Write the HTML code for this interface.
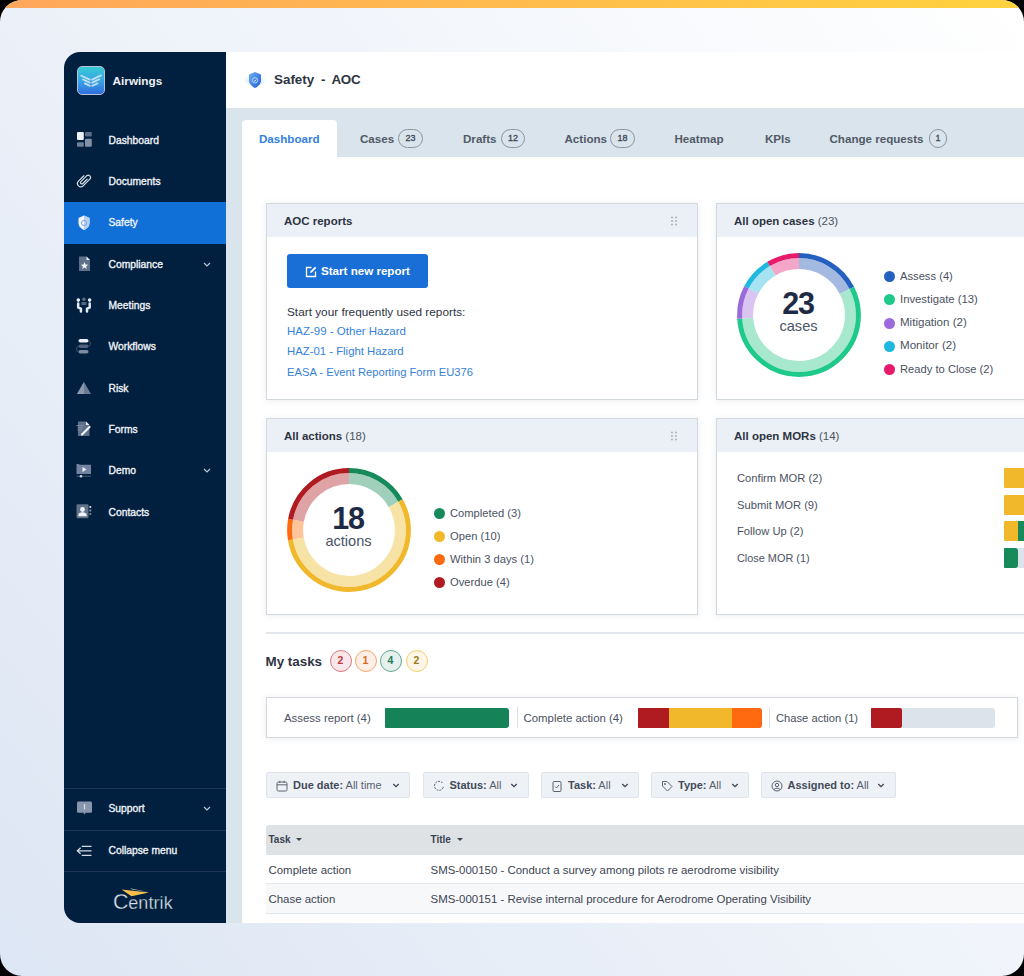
<!DOCTYPE html>
<html><head><meta charset="utf-8">
<style>
*{box-sizing:border-box;margin:0;padding:0}
html,body{width:1024px;height:976px;overflow:hidden;background:#000;font-family:"Liberation Sans",sans-serif}
.frame{position:absolute;left:0;top:0;width:1024px;height:976px;border-radius:22px;overflow:hidden;
 background:linear-gradient(52deg,#dde6f4 0%,#ffffff 100%)}
.band{position:absolute;left:0;top:0;width:1024px;height:8px;background:linear-gradient(90deg,#ffa65c,#ffd23e)}
.abs{position:absolute}
.t{position:absolute;white-space:nowrap;line-height:20px;height:20px}
.sb{position:absolute;left:64px;top:52px;width:162px;height:871px;background:#011f3e;border-radius:16px 0 0 16px;overflow:hidden}
.sbi{position:absolute;left:0;width:162px;height:41.33px}
.sbi .t{left:44.5px;top:11.4px;color:#eef1f6;font-weight:normal;font-size:10.3px;letter-spacing:0px;-webkit-text-stroke:0.35px #eef1f6}
.sbi svg{position:absolute;left:13px;top:13.7px}
.sbi.act{background:#1170d8;height:41.8px}
.sbsep{position:absolute;left:0;width:162px;height:1px;background:#1f3756}
.main{position:absolute;left:226px;top:52px;width:798px;height:871px;background:#d9e4ec}
.hdr{position:absolute;left:226px;top:52px;width:798px;height:56px;background:#fff}
.tab{position:absolute}
.tabt{font-size:11.6px;font-weight:bold;color:#525a67}
.badge{position:absolute;height:18.5px;border:1px solid #8d95a1;border-radius:9.5px;font-size:9px;line-height:17.3px;text-align:center;color:#3d4554;font-weight:normal;-webkit-text-stroke:0.3px #3d4554}
.card{position:absolute;background:#fff;border:1px solid #d3d8df;box-shadow:0 1px 7px rgba(30,50,90,0.09)}
.card .ch{position:absolute;left:0;top:0;right:0;height:33px;background:#ebf0f7}
.card .ct{position:absolute;left:17px;top:7px;white-space:nowrap;line-height:20px;font-size:11.5px;font-weight:bold;color:#2e3442}
.card .ct span{font-weight:normal;color:#4b5361}
.lg{position:absolute;white-space:nowrap;line-height:20px;font-size:11.2px;color:#4a5262}
.dot{position:absolute;width:11px;height:11px;border-radius:50%;margin:-0.5px 0 0 -0.5px}
.lnk{position:absolute;white-space:nowrap;line-height:20px;font-size:11.2px;color:#3582da}
.mb{position:absolute;width:22px;height:22px;border-radius:50%;border:1.7px solid;font-size:10.5px;line-height:18.6px;text-align:center;font-weight:bold}
.flt{position:absolute;top:772px;height:26px;background:#eef1f6;border:1px solid #dfe3ea;border-radius:2px}
.flt .t{top:2px;font-size:11px;color:#5a6270}
.flt .t b{color:#434b59}
.tr{position:absolute;left:266px;width:758px;height:29.5px}
.tr .t{top:5.3px;font-size:11.45px;color:#3d4554}
.content{position:absolute;left:242px;top:157px;width:782px;height:766px;background:#fff}
</style></head><body>
<div class="frame">
<div class="band"></div>

<!-- SIDEBAR -->
<div class="sb">
<div class="abs" style="left:13px;top:14px;width:28px;height:29px;border-radius:5px;background:linear-gradient(180deg,#35cbd6 0%,#3aa6e4 50%,#2f6ddf 100%);border:1px solid #b7c3d3">
<svg width="26" height="27" viewBox="0 0 26 27" style="position:absolute;left:0;top:0"><g fill="none" stroke="#dff0fa" stroke-width="1.75" stroke-linecap="round" opacity="0.8"><path d="M3.2 8.7 L11.8 12.6"/><path d="M23 8.4 L14.2 12.6"/><path d="M5.1 12.5 L11.8 15.6"/><path d="M21.3 12.3 L14.2 15.6"/><path d="M6.9 16.4 L11.8 18.9"/><path d="M19.5 16.4 L14.2 18.9"/></g></svg></div>
<div class="t" style="left:48.5px;top:19px;color:#eef1f6;font-weight:bold;font-size:11.8px;letter-spacing:0px">Airwings</div>
<div class="sbi" style="top:67.33px"><svg width="16" height="16" viewBox="0 0 16 16" style="left:11.6px;top:12.37px"><rect x="1" y="0" width="6.8" height="8" rx="1" fill="#eef1f6"/><rect x="9" y="0" width="6.8" height="4.4" rx="1" fill="#5d6e88"/><rect x="1" y="10.2" width="6.8" height="4.5" rx="1" fill="#6f7f97"/><rect x="9" y="6.7" width="6.8" height="8" rx="1" fill="#8391a8"/></svg><div class="t">Dashboard</div></div>
<div class="sbi" style="top:108.66px"><svg width="16" height="16" viewBox="0 0 16 16" style="left:11.6px;top:12.34px"><g transform="rotate(45 8 8)"><path d="M8.9 4.6 V10.6 A1.35 1.35 0 0 1 6.2 10.6 V2.6 A2.3 2.3 0 0 1 10.8 2.6 V12 A3.3 3.3 0 0 1 4.2 12 V4.4" fill="none" stroke="#d9dfe8" stroke-width="1.2" stroke-linecap="round"/></g></svg><div class="t">Documents</div></div>
<div class="sbi act" style="top:149.99px"><svg width="16" height="16" viewBox="0 0 16 16" style="left:11.6px;top:12.71px"><path d="M8 0.5 L13.5 3 L13.5 8 C13.5 11.5 11 13.6 8 15 C5 13.6 2.5 11.5 2.5 8 L2.5 3 Z" fill="#f2f5fa"/><path d="M8 0.5 L13.5 3 L13.5 8 C13.5 11.5 11 13.6 8 15 Z" fill="#b8cff0"/><circle cx="8" cy="8" r="2.6" fill="none" stroke="#7fa6e6" stroke-width="1"/></svg><div class="t">Safety</div></div>
<div class="sbi" style="top:191.32px"><svg width="16" height="16" viewBox="0 0 16 16" style="left:11.6px;top:12.68px"><path d="M3 0.5 L10.5 0.5 L14 4 L14 15 L3 15 Z" fill="#5f7089"/><path d="M10.5 0.5 L14 4 L10.5 4 Z" fill="#e8ecf3"/><path d="M8.5 6 L9.5 8.6 L12.2 8.7 L10.1 10.4 L10.8 13 L8.5 11.5 L6.2 13 L6.9 10.4 L4.8 8.7 L7.5 8.6 Z" fill="#f2f4f8"/></svg><div class="t">Compliance</div><svg class="chev" width="8" height="5" viewBox="0 0 8 5" style="position:absolute;left:139px;top:18.5px"><path d="M1 1 L4 4 L7 1" fill="none" stroke="#c4ccd8" stroke-width="1.1"/></svg></div>
<div class="sbi" style="top:232.65px"><svg width="16" height="16" viewBox="0 0 16 16" style="left:11.6px;top:12.35px"><circle cx="2.3" cy="3.1" r="1.8" fill="#e9edf4"/><circle cx="13.6" cy="3.1" r="1.8" fill="#e9edf4"/><circle cx="7.9" cy="2.2" r="1.7" fill="#5d6e88"/><rect x="5.4" y="5" width="5" height="3" rx="0.6" fill="#536581"/><path d="M2.2 6.6 L2.2 10.6 L4.9 11.6 L4.9 14.4" fill="none" stroke="#e4e9f2" stroke-width="2.5" stroke-linecap="round" stroke-linejoin="round"/><path d="M13.7 6.6 L13.7 10.6 L11 11.6 L11 14.4" fill="none" stroke="#e4e9f2" stroke-width="2.5" stroke-linecap="round" stroke-linejoin="round"/></svg><div class="t">Meetings</div></div>
<div class="sbi" style="top:273.98px"><svg width="16" height="16" viewBox="0 0 16 16" style="left:11.6px;top:12.72px"><rect x="2.5" y="0" width="10" height="3.5" rx="1.75" fill="#eef1f6"/><rect x="2.5" y="5.6" width="10" height="3.4" rx="1.7" fill="#4e607b"/><rect x="2.5" y="11" width="10" height="3.6" rx="1.8" fill="#7c8ba2"/><path d="M12.5 1.8 C15 1.8 15 7.3 12.5 7.3 M2.5 7.3 C0 7.3 0 12.8 2.5 12.8" fill="none" stroke="#4e607b" stroke-width="0.9"/></svg><div class="t">Workflows</div></div>
<div class="sbi" style="top:315.31px"><svg width="16" height="16" viewBox="0 0 16 16" style="left:11.6px;top:14.39px"><path d="M8 0 L15 12 L1 12 Z" fill="#6a7a92"/><path d="M8 0 L8 12 L1 12 Z" fill="#8a98ad"/></svg><div class="t">Risk</div></div>
<div class="sbi" style="top:356.64px"><svg width="16" height="16" viewBox="0 0 16 16" style="left:11.6px;top:12.26px"><path d="M2 0.5 L10 0.5 L13.5 4 L13.5 15 L2 15 Z" fill="#5f7089"/><path d="M10 0.5 L13.5 4 L10 4 Z" fill="#e8ecf3"/><path d="M0.5 4.6 L8 4.6 M1.5 6.8 L7 6.8 M1.5 9 L6 9" stroke="#7e8da4" stroke-width="1"/><path d="M13.5 6 L6 13.5" stroke="#f2f4f8" stroke-width="2.2" stroke-linecap="round"/></svg><div class="t">Forms</div></div>
<div class="sbi" style="top:397.97px"><svg width="16" height="16" viewBox="0 0 16 16" style="left:11.6px;top:13.23px"><path d="M0.5 1 L3 1 L3.6 1.8 L15 1.8 L15 11 L0.5 11 Z" fill="#7282a0"/><path d="M6.5 4 L10.5 6.5 L6.5 9 Z" fill="#eef1f6"/><path d="M0.5 13.2 L15 13.2" stroke="#5d6e88" stroke-width="0.8"/><circle cx="5" cy="13.2" r="1.3" fill="#d0d6e0"/></svg><div class="t">Demo</div><svg class="chev" width="8" height="5" viewBox="0 0 8 5" style="position:absolute;left:139px;top:18.5px"><path d="M1 1 L4 4 L7 1" fill="none" stroke="#c4ccd8" stroke-width="1.1"/></svg></div>
<div class="sbi" style="top:439.30px"><svg width="16" height="16" viewBox="0 0 16 16" style="left:11.6px;top:13.00px"><rect x="0.5" y="0.3" width="12" height="14" rx="1" fill="#5f7089"/><circle cx="6.5" cy="5.5" r="2.4" fill="#eef1f6"/><path d="M2.2 12.2 C2.2 9 4 8.2 6.5 8.2 C9 8.2 10.8 9 10.8 12.2 Z" fill="#eef1f6"/><rect x="13.4" y="2" width="1.8" height="2" fill="#c8d0dc"/><rect x="13.4" y="5.5" width="1.8" height="2" fill="#8b98ab"/><rect x="13.4" y="9" width="1.8" height="2" fill="#6f7f97"/></svg><div class="t">Contacts</div></div>
<div class="sbsep" style="top:735.5px"></div>
<div class="sbi" style="top:736px"><svg width="16" height="16" viewBox="0 0 16 16" style="left:12px;top:12.5px"><rect x="1" y="0.5" width="15" height="11.3" rx="1.4" fill="#8796ad"/><path d="M7 11.5 L8.5 13.6 L10 11.5 Z" fill="#8796ad"/><rect x="7.9" y="3" width="1.2" height="5.5" fill="#d5dce6"/></svg><div class="t">Support</div><svg width="8" height="5" viewBox="0 0 8 5" style="position:absolute;left:139px;top:17.5px"><path d="M1 1 L4 4 L7 1" fill="none" stroke="#c4ccd8" stroke-width="1.1"/></svg></div>
<div class="sbsep" style="top:777.5px"></div>
<div class="sbi" style="top:778px"><svg width="16" height="16" viewBox="0 0 16 16" style="left:12px;top:13.5px"><path d="M5.7 2.3 L15.5 2.3 M1.5 6.8 L15.5 6.8 M5.7 11.3 L15.5 11.3" stroke="#d5dbe5" stroke-width="1.3"/><path d="M4.6 3.8 L1.4 6.8 L4.6 9.8" fill="none" stroke="#d5dbe5" stroke-width="1.3"/></svg><div class="t">Collapse menu</div></div>
<div class="sbsep" style="top:819px"></div>
<svg width="70" height="30" viewBox="0 0 70 30" style="position:absolute;left:46px;top:832px">
<path d="M11.6 5.6 L39 8.4 L21.5 12.2 Z" fill="#f5bf4a"/><path d="M20 4.2 L39 8.2 L22 5.6 Z" fill="#b9c1cc"/>
<text x="3" y="24.8" font-family="Liberation Sans" font-size="21.5" fill="#dde2e9" stroke="#011f3e" stroke-width="0.35">C</text>
<text x="18.2" y="24.8" font-family="Liberation Sans" font-size="18" fill="#dde2e9" stroke="#011f3e" stroke-width="0.3" letter-spacing="0.1">entrik</text></svg>
</div>

<div class="main"></div>
<div class="hdr">
<svg width="24" height="20" viewBox="0 0 24 20" style="position:absolute;left:16.7px;top:18.5px"><defs><linearGradient id="hg" x1="0" y1="0" x2="1" y2="1"><stop offset="0" stop-color="#6fb0f5"/><stop offset="1" stop-color="#1f5fd3"/></linearGradient><radialGradient id="hglow"><stop offset="0.3" stop-color="#cfe1fa"/><stop offset="1" stop-color="#dbe8fb" stop-opacity="0"/></radialGradient></defs><rect x="0" y="4" width="24" height="11" fill="url(#hglow)"/><path d="M12 1 L18 3.6 L18 9 C18 13 15.2 15.5 12 17 C8.8 15.5 6 13 6 9 L6 3.6 Z" fill="url(#hg)"/><circle cx="12" cy="9.3" r="2.7" fill="none" stroke="#bcd6f7" stroke-width="0.9"/><path d="M10.9 9.3 L11.8 10.2 L13.3 8.5" fill="none" stroke="#e3eefc" stroke-width="0.9"/></svg>
<div class="t" style="left:48px;top:17.5px;font-size:13.4px;font-weight:bold;color:#2e3442">Safety</div><div class="t" style="left:95px;top:17.5px;font-size:13.4px;font-weight:bold;color:#2e3442">-</div><div class="t" style="left:105.5px;top:17.5px;font-size:13.4px;font-weight:bold;color:#2e3442;letter-spacing:-0.3px">AOC</div>
</div>
<div class="tab" style="left:242px;top:120px;width:94.5px;height:37px;background:#fff;border-radius:4px 4px 0 0"></div>
<div class="t tabt" style="left:259px;top:128.5px;color:#3580dc">Dashboard</div>
<div class="t tabt" style="left:360px;top:128.5px">Cases</div><div class="badge" style="left:398px;top:129.3px;width:25px">23</div>
<div class="t tabt" style="left:463px;top:128.5px">Drafts</div><div class="badge" style="left:501px;top:129.3px;width:24px">12</div>
<div class="t tabt" style="left:564.5px;top:128.5px">Actions</div><div class="badge" style="left:610px;top:129.3px;width:25px">18</div>
<div class="t tabt" style="left:674.5px;top:128.5px">Heatmap</div>
<div class="t tabt" style="left:765px;top:128.5px">KPIs</div>
<div class="t tabt" style="left:829.5px;top:128.5px">Change requests</div><div class="badge" style="left:929px;top:129.3px;width:18px">1</div>

<div class="content"></div>

<!-- card 1 -->
<div class="card" style="left:266px;top:203px;width:432px;height:197px">
 <div class="ch"></div><div class="ct">AOC reports</div>
 <svg width="8" height="10" viewBox="0 0 8 10" style="position:absolute;left:403px;top:12px"><g fill="#a9b1bd"><circle cx="2" cy="1.5" r="1"/><circle cx="6" cy="1.5" r="1"/><circle cx="2" cy="5" r="1"/><circle cx="6" cy="5" r="1"/><circle cx="2" cy="8.5" r="1"/><circle cx="6" cy="8.5" r="1"/></g></svg>
 <div class="abs" style="left:20px;top:50px;width:141px;height:34px;background:#1a6fd6;border-radius:3px"></div>
 <svg width="12" height="12" viewBox="0 0 12 12" style="position:absolute;left:38px;top:62px"><path d="M6.5 1.5 L1.5 1.5 L1.5 10.5 L10.5 10.5 L10.5 5.5" fill="none" stroke="#fff" stroke-width="1.3"/><path d="M5 7 L5.5 5.2 L10 0.8 L11.3 2.1 L6.8 6.5 Z" fill="#fff"/></svg>
 <div class="t" style="left:54px;top:57px;font-size:11.6px;font-weight:bold;color:#fff">Start new report</div>
 <div class="lg" style="left:20px;top:97.5px;color:#2e3442;font-size:11.8px">Start your frequently used reports:</div>
 <div class="lnk" style="left:20px;top:117.3px;font-size:11.5px">HAZ-99 - Other Hazard</div>
 <div class="lnk" style="left:20px;top:137.4px;font-size:11.35px">HAZ-01 - Flight Hazard</div>
 <div class="lnk" style="left:20px;top:157.5px">EASA - Event Reporting Form EU376</div>
</div>

<!-- card 2 -->
<div class="card" style="left:716px;top:203px;width:330px;height:197px">
 <div class="ch"></div><div class="ct">All open cases <span>(23)</span></div>
 <svg width="130" height="130" viewBox="0 0 130 130" style="position:absolute;left:17px;top:46.4px" id="donut1"><circle cx="65" cy="65" r="51.4" fill="none" stroke="#a3b9e0" stroke-width="11" stroke-dasharray="56.166 322.956" stroke-dashoffset="0.000" transform="rotate(-90 65 65)"/><circle cx="65" cy="65" r="51.4" fill="none" stroke="#a8e8cf" stroke-width="11" stroke-dasharray="182.540 322.956" stroke-dashoffset="-56.166" transform="rotate(-90 65 65)"/><circle cx="65" cy="65" r="51.4" fill="none" stroke="#d9c5f0" stroke-width="11" stroke-dasharray="28.083 322.956" stroke-dashoffset="-238.706" transform="rotate(-90 65 65)"/><circle cx="65" cy="65" r="51.4" fill="none" stroke="#a6e3f2" stroke-width="11" stroke-dasharray="28.083 322.956" stroke-dashoffset="-266.790" transform="rotate(-90 65 65)"/><circle cx="65" cy="65" r="51.4" fill="none" stroke="#f4a6c8" stroke-width="11" stroke-dasharray="28.083 322.956" stroke-dashoffset="-294.873" transform="rotate(-90 65 65)"/><circle cx="65" cy="65" r="59.4" fill="none" stroke="#2360c0" stroke-width="5" stroke-dasharray="64.908 373.221" stroke-dashoffset="0.000" transform="rotate(-90 65 65)"/><circle cx="65" cy="65" r="59.4" fill="none" stroke="#1ec98a" stroke-width="5" stroke-dasharray="210.951 373.221" stroke-dashoffset="-64.908" transform="rotate(-90 65 65)"/><circle cx="65" cy="65" r="59.4" fill="none" stroke="#9b6bdb" stroke-width="5" stroke-dasharray="32.454 373.221" stroke-dashoffset="-275.859" transform="rotate(-90 65 65)"/><circle cx="65" cy="65" r="59.4" fill="none" stroke="#1fb8de" stroke-width="5" stroke-dasharray="32.454 373.221" stroke-dashoffset="-308.313" transform="rotate(-90 65 65)"/><circle cx="65" cy="65" r="59.4" fill="none" stroke="#e6196a" stroke-width="5" stroke-dasharray="32.454 373.221" stroke-dashoffset="-340.767" transform="rotate(-90 65 65)"/></svg>
 <div class="t" style="left:46px;top:83.5px;width:70px;text-align:center;font-size:30.5px;line-height:30px;height:30px;font-weight:bold;color:#1f2a44;letter-spacing:-1.2px">23</div>
 <div class="t" style="left:46.5px;top:112px;width:70px;text-align:center;font-size:14.6px;color:#4a5466">cases</div>
 <div class="dot" style="left:167px;top:67.5px;background:#2360c0"></div><div class="lg" style="left:183px;top:62px">Assess (4)</div>
 <div class="dot" style="left:167px;top:90.5px;background:#1ec98a"></div><div class="lg" style="left:183px;top:85px;font-size:11.3px">Investigate (13)</div>
 <div class="dot" style="left:167px;top:114px;background:#9b6bdb"></div><div class="lg" style="left:183px;top:108.3px;font-size:11.55px">Mitigation (2)</div>
 <div class="dot" style="left:167px;top:137px;background:#1fb8de"></div><div class="lg" style="left:183px;top:131.3px;font-size:11.6px">Monitor (2)</div>
 <div class="dot" style="left:167px;top:160px;background:#e6196a"></div><div class="lg" style="left:183px;top:154.5px">Ready to Close (2)</div>
</div>

<!-- card 3 -->
<div class="card" style="left:266px;top:418px;width:432px;height:197px">
 <div class="ch"></div><div class="ct">All actions <span>(18)</span></div>
 <svg width="8" height="10" viewBox="0 0 8 10" style="position:absolute;left:403px;top:12px"><g fill="#a9b1bd"><circle cx="2" cy="1.5" r="1"/><circle cx="6" cy="1.5" r="1"/><circle cx="2" cy="5" r="1"/><circle cx="6" cy="5" r="1"/><circle cx="2" cy="8.5" r="1"/><circle cx="6" cy="8.5" r="1"/></g></svg>
 <svg width="130" height="130" viewBox="0 0 130 130" style="position:absolute;left:17px;top:46.4px" id="donut2"><circle cx="65" cy="65" r="51.4" fill="none" stroke="#a0d0bc" stroke-width="11" stroke-dasharray="53.826 322.956" stroke-dashoffset="0.000" transform="rotate(-90 65 65)"/><circle cx="65" cy="65" r="51.4" fill="none" stroke="#f8e3a6" stroke-width="11" stroke-dasharray="179.420 322.956" stroke-dashoffset="-53.826" transform="rotate(-90 65 65)"/><circle cx="65" cy="65" r="51.4" fill="none" stroke="#ffc49a" stroke-width="11" stroke-dasharray="17.942 322.956" stroke-dashoffset="-233.246" transform="rotate(-90 65 65)"/><circle cx="65" cy="65" r="51.4" fill="none" stroke="#dfa2a5" stroke-width="11" stroke-dasharray="71.768 322.956" stroke-dashoffset="-251.188" transform="rotate(-90 65 65)"/><circle cx="65" cy="65" r="59.4" fill="none" stroke="#178a5c" stroke-width="5" stroke-dasharray="62.204 373.221" stroke-dashoffset="0.000" transform="rotate(-90 65 65)"/><circle cx="65" cy="65" r="59.4" fill="none" stroke="#f0b82a" stroke-width="5" stroke-dasharray="207.345 373.221" stroke-dashoffset="-62.204" transform="rotate(-90 65 65)"/><circle cx="65" cy="65" r="59.4" fill="none" stroke="#ff6a10" stroke-width="5" stroke-dasharray="20.735 373.221" stroke-dashoffset="-269.549" transform="rotate(-90 65 65)"/><circle cx="65" cy="65" r="59.4" fill="none" stroke="#b01b22" stroke-width="5" stroke-dasharray="82.938 373.221" stroke-dashoffset="-290.283" transform="rotate(-90 65 65)"/></svg>
 <div class="t" style="left:46px;top:83.5px;width:70px;text-align:center;font-size:30.5px;line-height:30px;height:30px;font-weight:bold;color:#1f2a44;letter-spacing:-1.2px">18</div>
 <div class="t" style="left:46.5px;top:112px;width:70px;text-align:center;font-size:14.6px;color:#4a5466">actions</div>
 <div class="dot" style="left:167px;top:89.2px;background:#178a5c"></div><div class="lg" style="left:183px;top:83.5px">Completed (3)</div>
 <div class="dot" style="left:167px;top:112.2px;background:#f0b82a"></div><div class="lg" style="left:183px;top:106.5px">Open (10)</div>
 <div class="dot" style="left:167px;top:135.3px;background:#ff6a10"></div><div class="lg" style="left:183px;top:129.5px">Within 3 days (1)</div>
 <div class="dot" style="left:167px;top:158.3px;background:#b01b22"></div><div class="lg" style="left:183px;top:152.5px">Overdue (4)</div>
</div>

<!-- card 4 -->
<div class="card" style="left:716px;top:418px;width:330px;height:197px">
 <div class="ch"></div><div class="ct">All open MORs <span>(14)</span></div>
 <div class="lg" style="left:20px;top:49.2px">Confirm MOR (2)</div>
 <div class="lg" style="left:20px;top:75.5px">Submit MOR (9)</div>
 <div class="lg" style="left:20px;top:102px">Follow Up (2)</div>
 <div class="lg" style="left:20px;top:128.5px;font-size:10.9px">Close MOR (1)</div>
 <div class="abs" style="left:287px;top:49px;width:60px;height:20px;background:#f0b82a;border-radius:1px 0 0 1px"></div>
 <div class="abs" style="left:287px;top:75.8px;width:60px;height:20px;background:#f0b82a;border-radius:1px 0 0 1px"></div>
 <div class="abs" style="left:287px;top:102.3px;width:14px;height:20px;background:#f0b82a;border-radius:1px 0 0 1px"></div>
 <div class="abs" style="left:301px;top:102.3px;width:40px;height:20px;background:#178a5c"></div>
 <div class="abs" style="left:287px;top:129px;width:60px;height:20px;background:#dde3ea;border-radius:1px"></div>
 <div class="abs" style="left:287px;top:129px;width:14px;height:20px;background:#178a5c;border-radius:1px 3px 3px 1px"></div>
</div>


<div class="abs" style="left:266px;top:632px;width:758px;height:1.5px;background:#e3e7ed"></div>
<div class="t" style="left:265.5px;top:651.5px;font-size:13.4px;font-weight:bold;color:#2e3442">My tasks</div>
<div class="mb" style="left:329.5px;top:650px;border-color:#d97a7f;background:#f9e7e9;color:#c03a40">2</div>
<div class="mb" style="left:354.5px;top:650px;border-color:#f7a470;background:#fdefe5;color:#d06a22">1</div>
<div class="mb" style="left:379.5px;top:650px;border-color:#5fa98c;background:#e6f1ed;color:#1d7a58">4</div>
<div class="mb" style="left:405.5px;top:650px;border-color:#f0d070;background:#fdf6e6;color:#9a7a20">2</div>

<div class="card" style="left:266px;top:697px;width:752px;height:41px">
 <div class="lg" style="left:17px;top:9.5px;font-size:11.4px">Assess report (4)</div>
 <div class="abs" style="left:118px;top:9.5px;width:124px;height:20px;background:#168258;border-radius:1px 3px 3px 1px"></div>
 <div class="abs" style="left:249.5px;top:9px;width:1px;height:21px;background:#dde2e9"></div>
 <div class="lg" style="left:256.5px;top:9.5px;font-size:11.4px">Complete action (4)</div>
 <div class="abs" style="left:370.5px;top:9.5px;width:124px;height:20px;background:#ff6a10;border-radius:1px 3px 3px 1px"></div>
 <div class="abs" style="left:370.5px;top:9.5px;width:94px;height:20px;background:#f0b82a;border-radius:1px 0 0 1px"></div>
 <div class="abs" style="left:370.5px;top:9.5px;width:31px;height:20px;background:#b01b22;border-radius:1px 0 0 1px"></div>
 <div class="abs" style="left:502px;top:9px;width:1px;height:21px;background:#dde2e9"></div>
 <div class="lg" style="left:509px;top:9.5px;font-size:11.2px">Chase action (1)</div>
 <div class="abs" style="left:603.5px;top:9.5px;width:124px;height:20px;background:#dde3ea;border-radius:1px 3px 3px 1px"></div>
 <div class="abs" style="left:603.5px;top:9.5px;width:31px;height:20px;background:#b01b22;border-radius:1px 2px 2px 1px"></div>
</div>

<div class="flt" style="left:266px;width:144px">
 <svg width="12" height="12" viewBox="0 0 12 12" style="position:absolute;left:9px;top:6.5px"><rect x="1" y="2" width="10" height="9" rx="1.5" fill="none" stroke="#5b6472" stroke-width="1"/><path d="M1 4.8 L11 4.8 M3.8 0.8 L3.8 3 M8.2 0.8 L8.2 3" stroke="#5b6472" stroke-width="1"/></svg>
 <div class="t" style="left:26px"><b>Due date:</b> All time</div>
 <svg width="8" height="5" viewBox="0 0 8 5" style="position:absolute;left:124.5px;top:9.5px"><path d="M1.3 1 L4 3.7 L6.7 1" fill="none" stroke="#3d4554" stroke-width="1.3"/></svg>
</div>
<div class="flt" style="left:422.5px;width:106px">
 <svg width="12" height="12" viewBox="0 0 12 12" style="position:absolute;left:9px;top:6.5px"><path d="M9.5 3 A4.5 4.5 0 1 0 10.5 6" fill="none" stroke="#5b6472" stroke-width="1" stroke-dasharray="2 1"/></svg>
 <div class="t" style="left:26px"><b>Status:</b> All</div>
 <svg width="8" height="5" viewBox="0 0 8 5" style="position:absolute;left:86.5px;top:9.5px"><path d="M1.3 1 L4 3.7 L6.7 1" fill="none" stroke="#3d4554" stroke-width="1.3"/></svg>
</div>
<div class="flt" style="left:541px;width:98px">
 <svg width="12" height="12" viewBox="0 0 12 12" style="position:absolute;left:9px;top:6.5px"><rect x="2" y="1.5" width="8" height="10" rx="1" fill="none" stroke="#5b6472" stroke-width="1"/><path d="M4 6.5 L5.5 8 L8 5" fill="none" stroke="#5b6472" stroke-width="1"/></svg>
 <div class="t" style="left:26px"><b>Task:</b> All</div>
 <svg width="8" height="5" viewBox="0 0 8 5" style="position:absolute;left:78.5px;top:9.5px"><path d="M1.3 1 L4 3.7 L6.7 1" fill="none" stroke="#3d4554" stroke-width="1.3"/></svg>
</div>
<div class="flt" style="left:651px;width:98px">
 <svg width="12" height="12" viewBox="0 0 12 12" style="position:absolute;left:9px;top:6.5px"><path d="M1.5 1.5 L6 1.5 L11 6.5 L6.5 11 L1.5 6 Z" fill="none" stroke="#5b6472" stroke-width="1"/><circle cx="4" cy="4" r="0.9" fill="#5b6472"/></svg>
 <div class="t" style="left:26px"><b>Type:</b> All</div>
 <svg width="8" height="5" viewBox="0 0 8 5" style="position:absolute;left:78.5px;top:9.5px"><path d="M1.3 1 L4 3.7 L6.7 1" fill="none" stroke="#3d4554" stroke-width="1.3"/></svg>
</div>
<div class="flt" style="left:760.5px;width:135px">
 <svg width="12" height="12" viewBox="0 0 12 12" style="position:absolute;left:9px;top:6.5px"><circle cx="6" cy="6" r="5" fill="none" stroke="#5b6472" stroke-width="1"/><circle cx="6" cy="5" r="1.7" fill="none" stroke="#5b6472" stroke-width="1"/><path d="M3 9.5 C4 7.8 8 7.8 9 9.5" fill="none" stroke="#5b6472" stroke-width="1"/></svg>
 <div class="t" style="left:26px"><b>Assigned to:</b> All</div>
 <svg width="8" height="5" viewBox="0 0 8 5" style="position:absolute;left:115.5px;top:9.5px"><path d="M1.3 1 L4 3.7 L6.7 1" fill="none" stroke="#3d4554" stroke-width="1.3"/></svg>
</div>

<div class="tr" style="top:825px;background:#dee2e5;border-radius:3px 0 0 0">
 <div class="t" style="left:2.5px;font-size:10px;font-weight:bold;color:#3a4350">Task <span style="display:inline-block;width:0;height:0;border-left:3px solid transparent;border-right:3px solid transparent;border-top:3.5px solid #3a4350;vertical-align:2px;margin-left:3px"></span></div>
 <div class="t" style="left:164.5px;font-size:10px;font-weight:bold;color:#3a4350">Title <span style="display:inline-block;width:0;height:0;border-left:3px solid transparent;border-right:3px solid transparent;border-top:3.5px solid #3a4350;vertical-align:2px;margin-left:3px"></span></div>
</div>
<div class="tr" style="top:854.5px;background:#fff;border-bottom:1px solid #e3e7ee">
 <div class="t" style="left:2.5px">Complete action</div>
 <div class="t" style="left:164.5px">SMS-000150 - Conduct a survey among pilots re aerodrome visibility</div>
</div>
<div class="tr" style="top:884px;background:#f7f8fa;border-bottom:1px solid #e3e7ee">
 <div class="t" style="left:2.5px">Chase action</div>
 <div class="t" style="left:164.5px">SMS-000151 - Revise internal procedure for Aerodrome Operating Visibility</div>
</div>

</div>
</body></html>
